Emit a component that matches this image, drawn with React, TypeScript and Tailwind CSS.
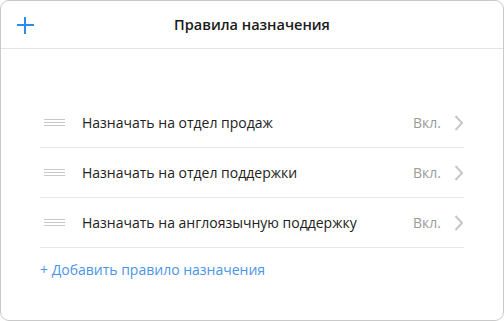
const rules = [
    'Назначать на отдел продаж',
    'Назначать на отдел поддержки',
    'Назначать на англоязычную поддержку',
];

function DragHandle() {
    return (
        <div className="flex w-[21px] flex-col gap-[2px]">
            <span className="h-px bg-[#c8c8c8]" />
            <span className="h-px bg-[#c8c8c8]" />
            <span className="h-px bg-[#c8c8c8]" />
        </div>
    );
}

function App() {
    return (
        <div className="h-[321px] w-[504px] bg-white font-['Open_Sans',sans-serif]">
            <div className="flex h-full flex-col rounded-[9px] border border-[#c9c9c9] bg-white">
                <div className="relative flex h-[48px] items-center justify-center border-b border-[#e3e3e3]">
                    <button className="absolute left-[15px] top-[15px] text-[#2b8cf0]">
                        <svg width="18" height="18" viewBox="0 0 18 18">
                            <path d="M9 1v17M1 9h17" stroke="currentColor" strokeWidth="2" />
                        </svg>
                    </button>
                    <h1 className="text-[14.5px] font-semibold text-[#1a1a1a]">Правила назначения</h1>
                </div>
                <div className="px-[39px] pt-[49px]">
                    {rules.map((rule) => (
                        <div key={rule} className="flex h-[50px] items-center border-b border-[#e8e8e8]">
                            <div className="pl-[4px]">
                                <DragHandle />
                            </div>
                            <span className="ml-[17px] flex-1 text-[14px] text-[#222]">{rule}</span>
                            <span className="text-[14px] text-[#9a9a9a]">Вкл.</span>
                            {/* шеврон */}
                            <svg className="ml-[13px] mr-[1px]" width="9" height="16" viewBox="0 0 9 16" fill="none">
                                <path d="M1.5 1l6.5 7-6.5 7" stroke="#c8c8c8" strokeWidth="2" />
                            </svg>
                        </div>
                    ))}
                    <a className="mt-[11px] block text-[14px] text-[#4a94e8]">+ Добавить правило назначения</a>
                </div>
            </div>
        </div>
    );
}

export default App;
